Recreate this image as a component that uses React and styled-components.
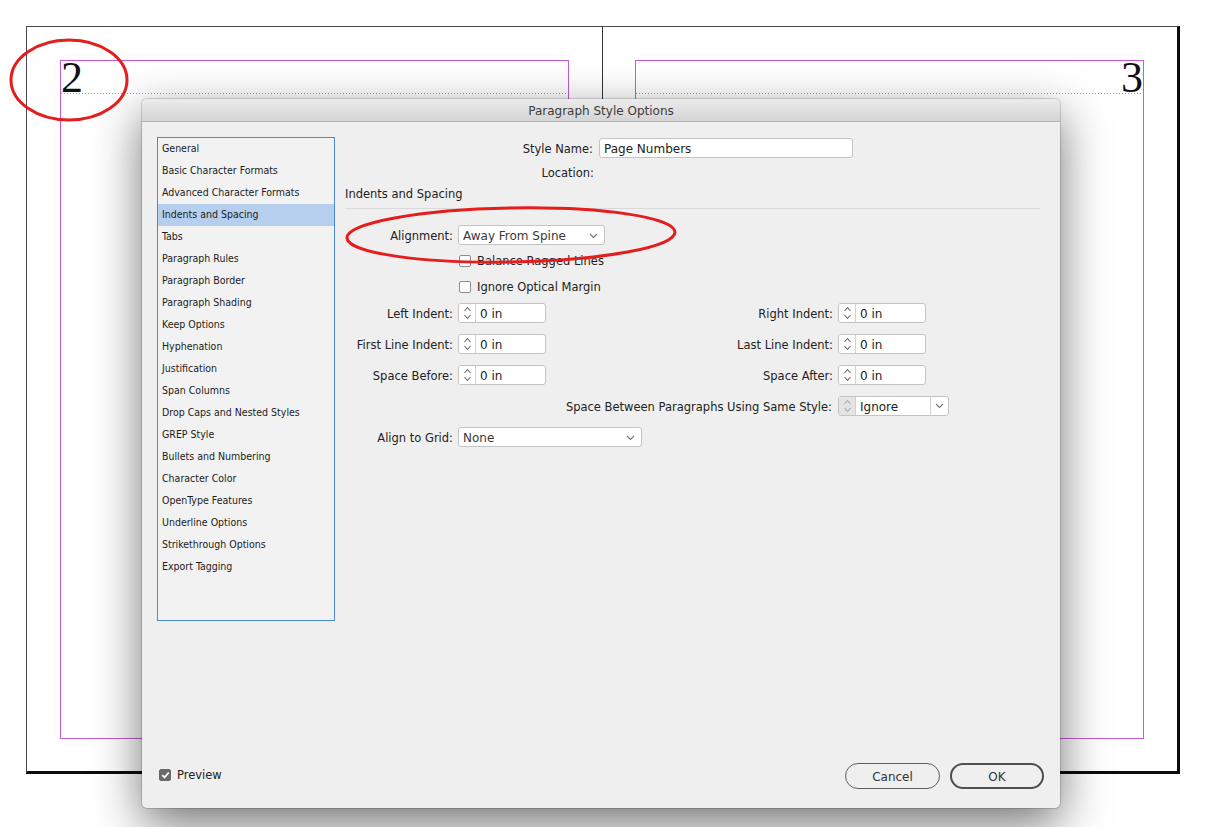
import React from "react";
import styled, { createGlobalStyle } from "styled-components";

const GlobalStyle = createGlobalStyle`
  html, body { margin: 0; padding: 0; background: #ffffff; }
  * { box-sizing: border-box; }
`;

const UI_FONT = `"DejaVu Sans", "Liberation Sans", sans-serif`;

const Stage = styled.div`
  position: relative;
  width: 1215px;
  height: 827px;
  overflow: hidden;
  background: #ffffff;
  font-family: ${UI_FONT};
`;

const Spread = styled.div`
  margin: 26px 0 0 26px;
  width: 1154px;
  height: 748px;
  display: flex;
  border-top: 1px solid #4a4a4a;
  border-left: 1px solid #4a4a4a;
  border-right: 3px solid #0c0c0c;
  border-bottom: 3px solid #0c0c0c;
`;

const Page = styled.div`
  width: ${(p) => (p.$left ? "576px" : "574px")};
  height: 100%;
  padding: ${(p) => (p.$left ? "33px 33px 32px 33px" : "33px 33px 32px 32px")};
  border-right: ${(p) => (p.$left ? "1px solid #333" : "none")};
`;

const MarginBox = styled.div`
  height: 100%;
  border: 1px solid #c65ad8;
`;

const PageHead = styled.div`
  height: 32px;
  font-family: "Liberation Serif", "DejaVu Serif", serif;
  font-size: 44px;
  line-height: 34px;
  color: #111;
  text-align: ${(p) => (p.$right ? "right" : "left")};
  overflow: visible;
`;

const Baseline = styled.div`
  height: 1px;
  background: repeating-linear-gradient(to right, #8ea4bb 0 1px, transparent 1px 3px);
`;

const Dialog = styled.div`
  position: absolute;
  left: 142px;
  top: 99px;
  width: 918px;
  height: 709px;
  display: flex;
  flex-direction: column;
  background: #efefef;
  border-radius: 5px;
  box-shadow: 0 16px 48px rgba(0, 0, 0, 0.55), 0 0 0 1px rgba(0, 0, 0, 0.15);
  color: #222;
`;

const TitleBar = styled.div`
  height: 23px;
  flex: none;
  display: flex;
  align-items: center;
  justify-content: center;
  padding-top: 2px;
  border-radius: 5px 5px 0 0;
  border-bottom: 1px solid #b4b4b4;
  background: linear-gradient(#ececec, #d4d4d4);
  font-size: 12px;
  color: #3c3c3c;
`;

const Body = styled.div`
  flex: 1;
  display: flex;
  flex-direction: column;
  padding: 15px 16px 19px 15px;
`;

const Main = styled.div`
  flex: 1;
  display: flex;
  gap: 10px;
  align-items: flex-start;
`;

const Sidebar = styled.ul`
  list-style: none;
  margin: 0;
  padding: 0;
  width: 178px;
  height: 484px;
  flex: none;
  border: 1px solid #4a89d6;
  background: #f2f2f2;
  font-family: "DejaVu Sans Condensed", "DejaVu Sans", sans-serif;
  font-size: 10.5px;
`;

const SideItem = styled.li`
  height: 22px;
  line-height: 21px;
  padding-left: 4px;
  white-space: nowrap;
  color: #1c1c1c;
  background: ${(p) => (p.$active ? "#b6cfee" : "transparent")};
`;

const Panel = styled.div`
  flex: 1;
  display: flex;
  flex-direction: column;
  padding-top: 1px;
  font-size: 11.5px;
`;

const Row = styled.div`
  display: flex;
  align-items: center;
  height: ${(p) => p.$h || 20}px;
  margin-top: ${(p) => p.$mt || 0}px;
  gap: ${(p) => (p.$gap === undefined ? 5 : p.$gap)}px;
`;

const Label = styled.span`
  width: ${(p) => p.$w}px;
  flex: none;
  text-align: right;
  white-space: nowrap;
  color: #222;
  padding-top: 2px;
`;

const TextInput = styled.div`
  width: ${(p) => p.$w}px;
  height: 20px;
  display: flex;
  align-items: center;
  padding: 2px 0 0 4px;
  background: #fff;
  border: 1px solid #c4c4c4;
  border-radius: 3px;
  font-size: 12px;
`;

const SectionTitle = styled.div`
  margin-top: 7px;
  height: 14px;
  line-height: 16px;
  font-size: 11.5px;
`;

const Separator = styled.div`
  margin-top: 8px;
  margin-right: 4px;
  height: 1px;
  background: #dadada;
`;

const Select = styled.div`
  width: ${(p) => p.$w}px;
  height: 20px;
  display: flex;
  align-items: center;
  justify-content: space-between;
  padding: 1px 6px 0 4px;
  background: #fff;
  border: 1px solid #c4c4c4;
  border-radius: 3px;
  font-size: 12px;
  color: #3a3a3a;
`;

const CheckRow = styled.label`
  display: flex;
  align-items: center;
  gap: 6px;
  height: 16px;
  margin-top: ${(p) => p.$mt}px;
  margin-left: 114px;
  padding-top: 1px;
  font-size: 11.5px;
`;

const Box = styled.span`
  width: 12px;
  height: 12px;
  flex: none;
  display: flex;
  align-items: center;
  justify-content: center;
  border-radius: 2px;
  border: 1px solid ${(p) => (p.$checked ? "#6a6a6a" : "#8d8d8d")};
  background: ${(p) => (p.$checked ? "#6a6a6a" : "#fff")};
`;

const Spinner = styled.div`
  width: ${(p) => p.$w || 88}px;
  height: 20px;
  display: flex;
  background: #fff;
  border: 1px solid #c4c4c4;
  border-radius: 3px;
  overflow: hidden;
  font-size: 12px;
`;

const Stepper = styled.div`
  width: 17px;
  flex: none;
  display: flex;
  align-items: center;
  justify-content: center;
  border-right: 1px solid #d2d2d2;
  background: ${(p) => (p.$disabled ? "#e4e4e4" : "#fff")};
`;

const SpinValue = styled.div`
  flex: 1;
  display: flex;
  align-items: center;
  padding: 2px 0 0 4px;
  color: #222;
`;

const DropButton = styled.div`
  width: 18px;
  flex: none;
  display: flex;
  align-items: center;
  justify-content: center;
  border-left: 1px solid #d2d2d2;
`;

const Footer = styled.div`
  height: 26px;
  flex: none;
  display: flex;
  align-items: center;
  gap: 10px;
`;

const Preview = styled.label`
  display: flex;
  align-items: center;
  gap: 6px;
  margin-left: 2px;
  margin-right: auto;
  margin-top: -2px;
  font-size: 11.5px;
`;

const PillButton = styled.button`
  width: ${(p) => p.$w}px;
  height: 26px;
  border-radius: 13px;
  border: ${(p) => (p.$primary ? "2px solid #4f4f4f" : "1px solid #5e5e5e")};
  background: transparent;
  font-family: ${UI_FONT};
  font-size: 12px;
  color: #333;
  padding: 2px 0 0;
`;

const Annotations = styled.svg`
  position: absolute;
  left: 0;
  top: 0;
  pointer-events: none;
`;

const Chevron = () => (
  <svg width="9" height="6" viewBox="0 0 9 6">
    <polyline points="1,1 4.5,4.5 8,1" fill="none" stroke="#777" strokeWidth="1.1" />
  </svg>
);

const UpDown = ({ color = "#666" }) => (
  <svg width="9" height="16" viewBox="0 0 9 16">
    <polyline points="1.5,6 4.5,2.5 7.5,6" fill="none" stroke={color} strokeWidth="1.1" />
    <polyline points="1.5,10 4.5,13.5 7.5,10" fill="none" stroke={color} strokeWidth="1.1" />
  </svg>
);

const Tick = () => (
  <svg width="9" height="8" viewBox="0 0 9 8">
    <polyline points="1.3,4.2 3.5,6.4 7.8,1.5" fill="none" stroke="#fff" strokeWidth="1.8" />
  </svg>
);

const sections = [
  "General",
  "Basic Character Formats",
  "Advanced Character Formats",
  "Indents and Spacing",
  "Tabs",
  "Paragraph Rules",
  "Paragraph Border",
  "Paragraph Shading",
  "Keep Options",
  "Hyphenation",
  "Justification",
  "Span Columns",
  "Drop Caps and Nested Styles",
  "GREP Style",
  "Bullets and Numbering",
  "Character Color",
  "OpenType Features",
  "Underline Options",
  "Strikethrough Options",
  "Export Tagging",
];

const indentRows = [
  ["Left Indent:", "Right Indent:"],
  ["First Line Indent:", "Last Line Indent:"],
  ["Space Before:", "Space After:"],
];

function SpinField({ value }) {
  return (
    <Spinner>
      <Stepper>
        <UpDown />
      </Stepper>
      <SpinValue>{value}</SpinValue>
    </Spinner>
  );
}

export default function App() {
  return (
    <Stage>
      <GlobalStyle />
      <Spread>
        <Page $left>
          <MarginBox>
            <PageHead>2</PageHead>
            <Baseline />
          </MarginBox>
        </Page>
        <Page>
          <MarginBox>
            <PageHead $right>3</PageHead>
            <Baseline />
          </MarginBox>
        </Page>
      </Spread>

      <Dialog>
        <TitleBar>Paragraph Style Options</TitleBar>
        <Body>
          <Main>
            <Sidebar>
              {sections.map((s) => (
                <SideItem key={s} $active={s === "Indents and Spacing"}>
                  {s}
                </SideItem>
              ))}
            </Sidebar>
            <Panel>
              <Row $gap={6}>
                <Label $w={248}>Style Name:</Label>
                <TextInput $w={254}>Page Numbers</TextInput>
              </Row>
              <Row $mt={7} $h={14}>
                <Label $w={249}>Location:</Label>
              </Row>
              <SectionTitle>Indents and Spacing</SectionTitle>
              <Separator />
              <Row $mt={16}>
                <Label $w={108}>Alignment:</Label>
                <Select $w={147}>
                  Away From Spine
                  <Chevron />
                </Select>
              </Row>
              <CheckRow $mt={7}>
                <Box />
                Balance Ragged Lines
              </CheckRow>
              <CheckRow $mt={10}>
                <Box />
                Ignore Optical Margin
              </CheckRow>
              {indentRows.map(([a, b], i) => (
                <Row key={a} $mt={i === 0 ? 9 : 11}>
                  <Label $w={108}>{a}</Label>
                  <SpinField value="0 in" />
                  <Label $w={282}>{b}</Label>
                  <SpinField value="0 in" />
                </Row>
              ))}
              <Row $mt={11} $gap={6}>
                <Label $w={487}>Space Between Paragraphs Using Same Style:</Label>
                <Spinner $w={111}>
                  <Stepper $disabled>
                    <UpDown color="#aaa" />
                  </Stepper>
                  <SpinValue>Ignore</SpinValue>
                  <DropButton>
                    <Chevron />
                  </DropButton>
                </Spinner>
              </Row>
              <Row $mt={11}>
                <Label $w={108}>Align to Grid:</Label>
                <Select $w={184}>
                  None
                  <Chevron />
                </Select>
              </Row>
            </Panel>
          </Main>
          <Footer>
            <Preview>
              <Box $checked>
                <Tick />
              </Box>
              Preview
            </Preview>
            <PillButton $w={95}>Cancel</PillButton>
            <PillButton $w={94} $primary>
              OK
            </PillButton>
          </Footer>
        </Body>
      </Dialog>

      <Annotations width="1215" height="827" viewBox="0 0 1215 827">
        <ellipse cx="69" cy="80" rx="58" ry="40" fill="none" stroke="#e41d1d" strokeWidth="3" />
        <ellipse
          cx="511"
          cy="235"
          rx="164"
          ry="27"
          fill="none"
          stroke="#e41d1d"
          strokeWidth="3"
          transform="rotate(-1 511 235)"
        />
      </Annotations>
    </Stage>
  );
}
